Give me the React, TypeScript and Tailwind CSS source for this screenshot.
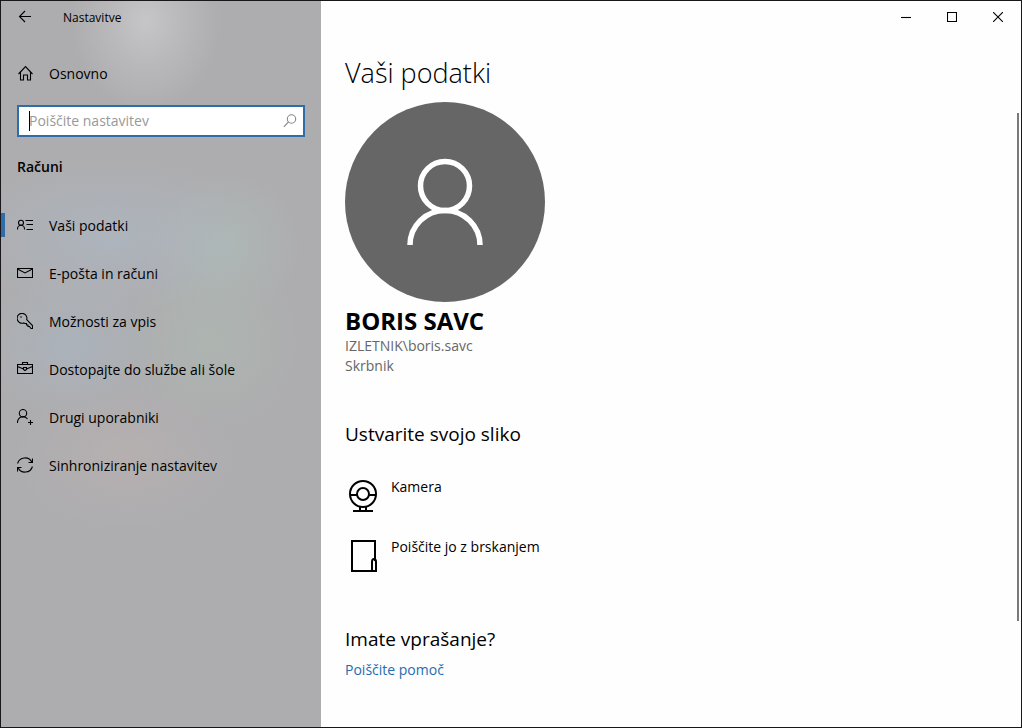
import type { ReactNode } from 'react';

type Item = { label: string; icon: ReactNode; active?: boolean };

const line = { fill: 'none', stroke: 'currentColor', strokeWidth: 1.1 };

const navItems: Item[] = [
  {
    label: 'Vaši podatki',
    active: true,
    icon: (
      <svg className="size-4" viewBox="0 0 16 16" {...line} aria-hidden="true">
        <circle cx="4" cy="5.8" r="2.5" />
        <path d="M.5 12.5V12a3.5 3.7 0 0 1 7 0v.5M8.5 3.5H16M9.5 7.5H16M9.5 12.5H16" />
      </svg>
    ),
  },
  {
    label: 'E-pošta in računi',
    icon: (
      <svg className="size-4" viewBox="0 0 16 16" {...line} aria-hidden="true">
        <path d="M.5 3.5h15v9H.5zM.5 4 8 8l7.5-4" />
      </svg>
    ),
  },
  {
    label: 'Možnosti za vpis',
    icon: (
      <svg className="size-4" viewBox="0 0 16 16" {...line} aria-hidden="true">
        <path d="M9.7 6.7A4.9 4.9 0 1 0 6.6 9.9L8 10.5h1.5V12H11v1.5h1.5l1.5 2h1.5v-3z" />
        <circle cx="4" cy="4" r=".8" fill="currentColor" stroke="none" />
      </svg>
    ),
  },
  {
    label: 'Dostopajte do službe ali šole',
    icon: (
      <svg className="size-4" viewBox="0 0 16 16" {...line} aria-hidden="true">
        <path d="M.5 3.5h15v9H.5zM5.5 3.5v-2h5v2M.5 5.5l6 2.5M9.5 8l6-2.5M6.5 6.5h3v2l-1.5 1-1.5-1z" />
      </svg>
    ),
  },
  {
    label: 'Drugi uporabniki',
    icon: (
      <svg className="size-4" viewBox="0 0 16 16" {...line} aria-hidden="true">
        <circle cx="6" cy="4.2" r="3.7" />
        <path d="M.5 14a5.6 6.1 0 0 1 10-4M13.5 11v5M11 13.5h5" />
      </svg>
    ),
  },
  {
    label: 'Sinhroniziranje nastavitev',
    icon: (
      <svg className="size-4" viewBox="0 0 16 16" {...line} aria-hidden="true">
        <path d="M.6 6.5A7.6 7.4 0 0 1 15 5.5M15.5 1.5v4h-4M15.4 9.5A7.6 7.4 0 0 1 1 10.5M.5 14.5v-4h4" />
      </svg>
    ),
  },
];

const pictureSources: Item[] = [
  {
    label: 'Kamera',
    icon: (
      <svg className="h-10 w-9" viewBox="0 0 36 40" fill="none" stroke="currentColor" strokeWidth="2" aria-hidden="true">
        <circle cx="18" cy="17" r="13" />
        <circle cx="18" cy="17" r="6" />
        <path d="M5 18h7M24 18h7M15 30v4M21 30v4M8 34h20" />
      </svg>
    ),
  },
  {
    label: 'Poiščite jo z brskanjem',
    icon: (
      <svg className="h-10 w-9" viewBox="0 0 36 40" fill="none" stroke="currentColor" strokeWidth="2" aria-hidden="true">
        <path d="M27 34H7V4h23v20" />
        <path d="M27 34v-9a2 3 0 0 1 4 0v9z" />
      </svg>
    ),
  },
];

function Sidebar() {
  return (
    <aside className="flex w-80 shrink-0 flex-col bg-[#adadaf] bg-[radial-gradient(ellipse_75px_90px_at_145px_20px,#c6c6c8,#c6c6c880_45%,transparent),radial-gradient(ellipse_150px_80px_at_110px_235px,#adb6c0cc,transparent),radial-gradient(ellipse_80px_75px_at_220px_245px,#aebab6cc,transparent),radial-gradient(ellipse_90px_90px_at_210px_340px,#aeb7b1cc,transparent),radial-gradient(ellipse_90px_70px_at_70px_345px,#abb4becc,transparent),radial-gradient(ellipse_110px_75px_at_125px_455px,#b8b0b0cc,transparent)]">
      <div className="flex h-8 items-center">
        <button aria-label="Nazaj" className="flex h-8 w-12 items-center justify-center">
          <svg className="size-4" viewBox="0 0 16 16" {...line} aria-hidden="true">
            <path d="M14 7.5H2.5M8 2 2.5 7.5 8 13" />
          </svg>
        </button>
        <span className="ml-3.5 pt-0.5 text-xs">Nastavitve</span>
      </div>

      <button className="mt-4 flex h-12 items-center gap-4 px-4 text-left">
        <svg className="size-4" viewBox="0 0 16 16" {...line} aria-hidden="true">
          <path d="M1.5 9 8.5 1.5l7 7.5M3.5 7v8h3v-5h4v5h3V7" />
        </svg>
        <span className="pt-0.5">Osnovno</span>
      </button>

      <div className="relative mx-4 mt-2 flex h-8 items-center border-2 border-[#2e6da8] bg-white">
        <input
          type="text"
          aria-label="Poiščite nastavitev"
          placeholder="Poiščite nastavitev"
          className="h-full min-w-0 flex-1 px-2.5 pb-0.5 outline-none placeholder:text-[#999999]"
        />
        <span className="absolute top-1 left-2.5 h-5 w-px bg-black" />
        <svg className="mr-1.5 size-3.5 text-[#888888]" viewBox="0 0 14 14" {...line} aria-hidden="true">
          <circle cx="8.5" cy="5" r="4.2" />
          <path d="M5.5 8 .8 12.8" />
        </svg>
      </div>

      <h2 className="mt-4 px-4 leading-7 font-semibold">Računi</h2>

      <nav className="mt-5">
        {navItems.map((item) => (
          <a
            key={item.label}
            href="#"
            aria-current={item.active ? 'page' : undefined}
            className="relative flex h-12 items-center gap-4 px-4"
          >
            {item.active && <span className="absolute left-0 h-6 w-1 bg-[#2e6da8]" />}
            {item.icon}
            <span className="pt-0.5">{item.label}</span>
          </a>
        ))}
      </nav>
    </aside>
  );
}

function WindowControls() {
  return (
    <div className="flex h-8 justify-end">
      <button aria-label="Minimiraj" className="flex w-[46px] items-center justify-center">
        <svg className="size-2.5" viewBox="0 0 10 10" {...line} aria-hidden="true">
          <path d="M0 5.5h10" />
        </svg>
      </button>
      <button aria-label="Maksimiraj" className="flex w-[46px] items-center justify-center">
        <svg className="size-2.5" viewBox="0 0 10 10" {...line} aria-hidden="true">
          <path d="M.5.5h9v9h-9z" />
        </svg>
      </button>
      <button aria-label="Zapri" className="flex w-[46px] items-center justify-center">
        <svg className="size-2.5" viewBox="0 0 10 10" {...line} aria-hidden="true">
          <path d="m0 0 10 10M10 0 0 10" />
        </svg>
      </button>
    </div>
  );
}

export default function App() {
  return (
    <div className="flex min-h-screen border border-[#1a171b] bg-[#fefefe] font-['Open_Sans','Noto_Sans',sans-serif] text-sm text-black">
      <Sidebar />
      <div className="relative flex-1">
        <WindowControls />
        <main className="px-6 pt-5 pb-10">
          <h1 className="text-[27px] leading-10 font-light">Vaši podatki</h1>

          <svg className="mt-[9px] size-[200px]" viewBox="0 0 200 200" role="img" aria-label="BORIS SAVC">
            <circle cx="100" cy="100" r="100" fill="#666666" />
            <g fill="none" stroke="#ffffff" strokeWidth="5.5">
              <circle cx="100" cy="84" r="24.5" />
              <path d="M65 143a35 34.5 0 0 1 70 0" />
            </g>
          </svg>

          <h2 className="mt-1 text-2xl leading-[30px] font-bold">BORIS SAVC</h2>
          <p className="leading-5 text-[#666666]">IZLETNIK\boris.savc</p>
          <p className="leading-5 text-[#666666]">Skrbnik</p>

          <h3 className="mt-11 text-[19px] leading-7">Ustvarite svojo sliko</h3>
          <div className="mt-[29px] flex flex-col items-start gap-5">
            {pictureSources.map((source) => (
              <button key={source.label} className="flex items-start gap-2.5 text-left leading-5">
                {source.icon}
                {source.label}
              </button>
            ))}
          </div>

          <h3 className="mt-12 text-[19px] leading-7">Imate vprašanje?</h3>
          <a href="#" className="mt-[7px] inline-block leading-5 text-[#1f6cae]">
            Poiščite pomoč
          </a>
        </main>

        {/* Scroll thumb */}
        <div className="absolute top-28 right-0.5 h-[70%] w-0.5 bg-[#7a7a7a]" />
      </div>
    </div>
  );
}
